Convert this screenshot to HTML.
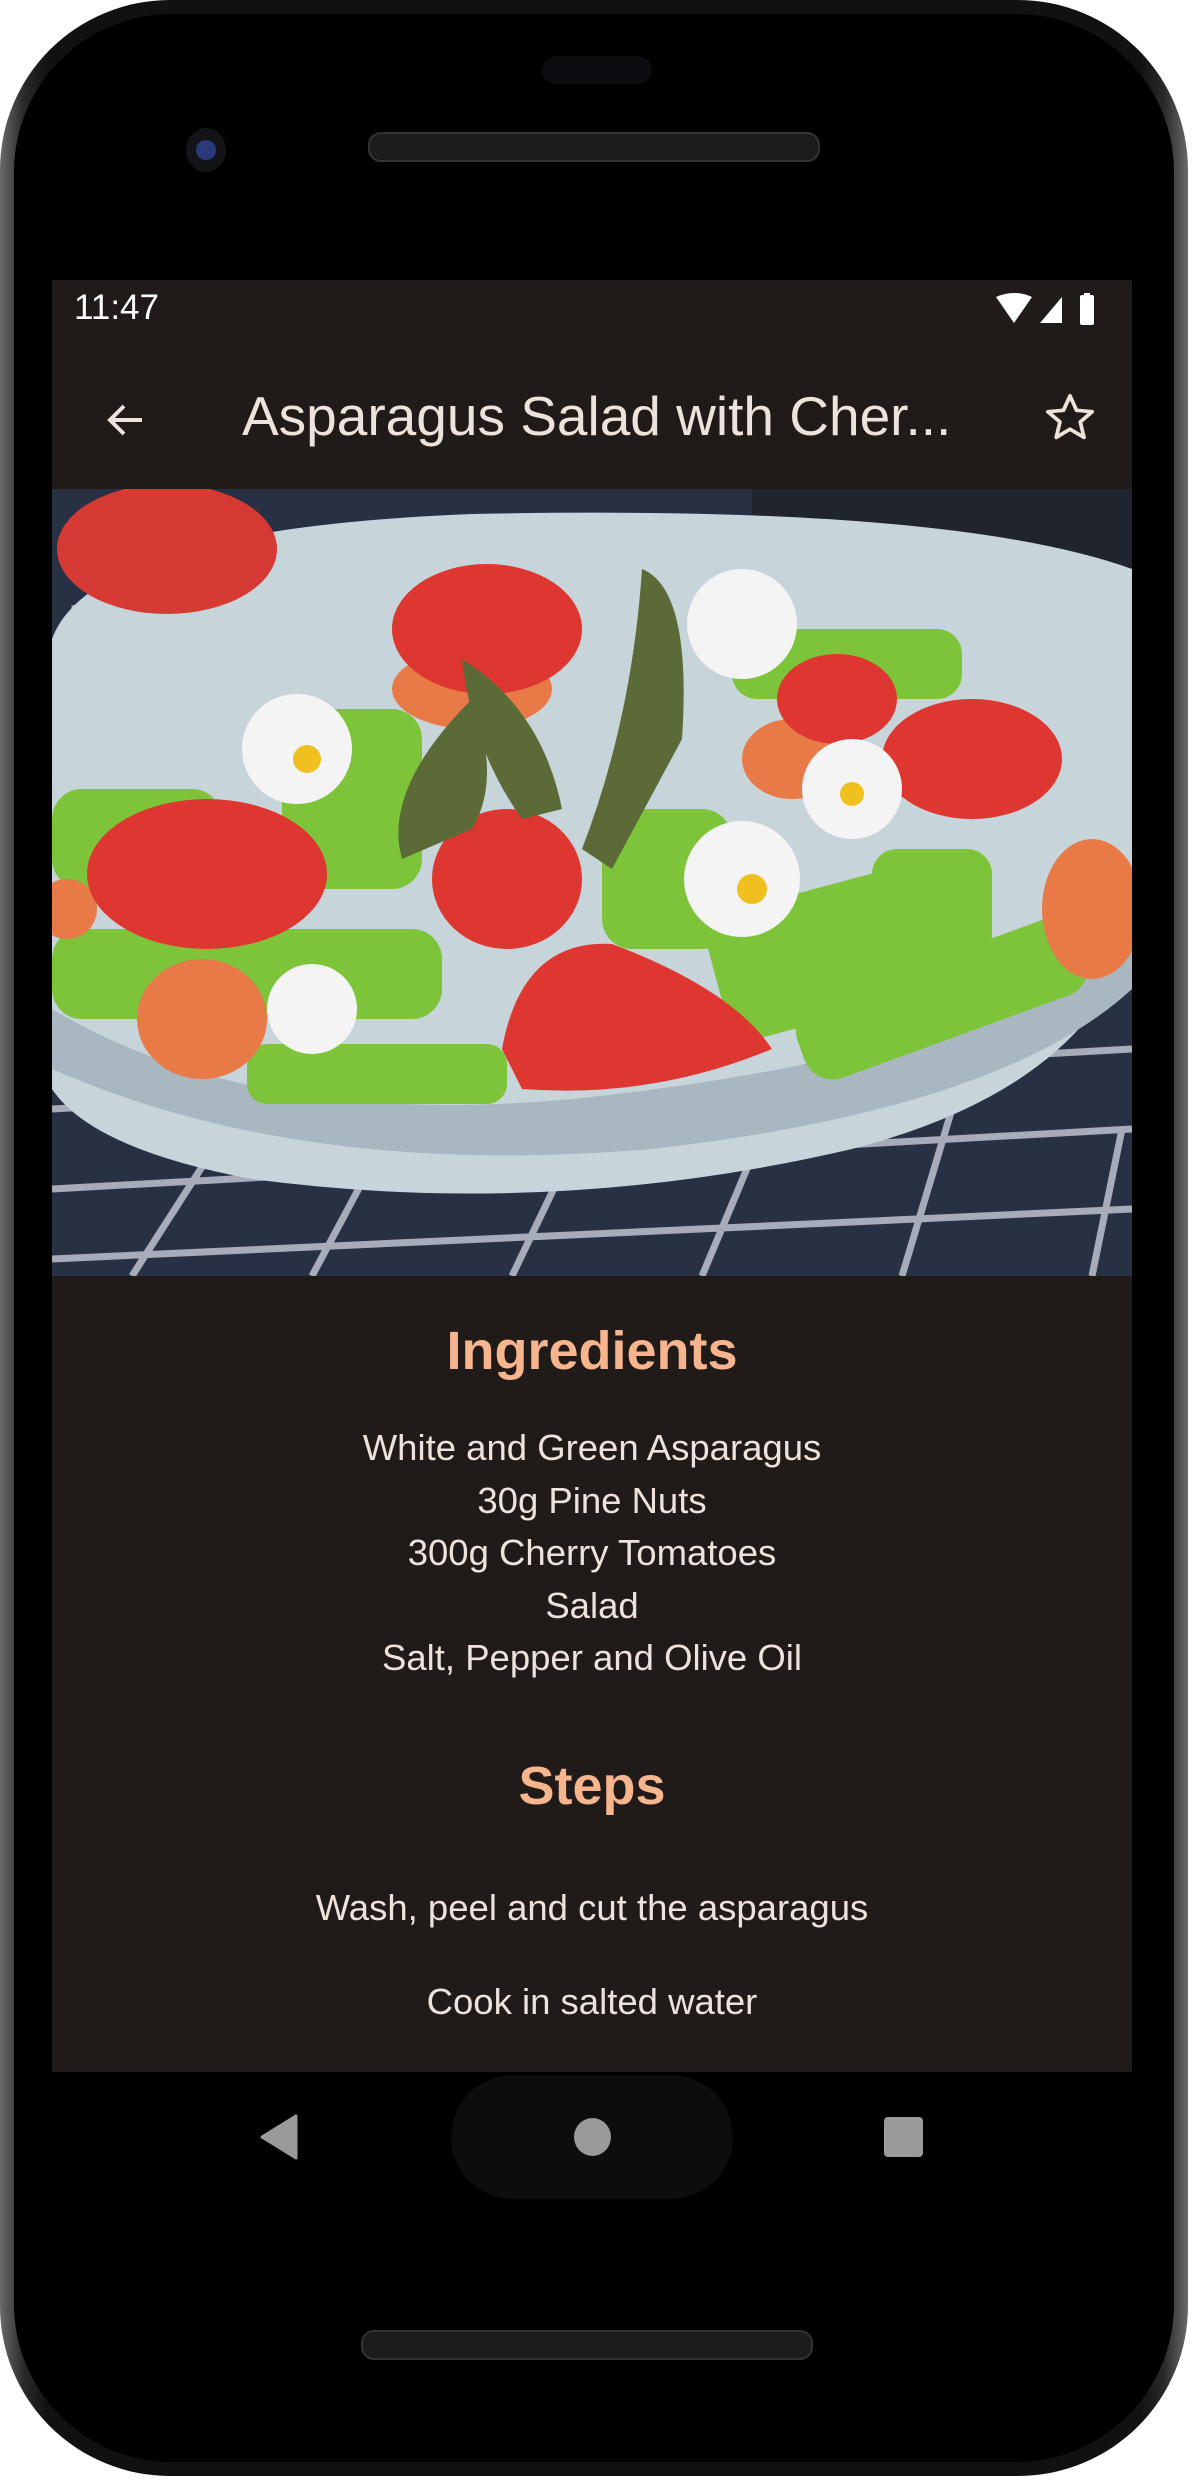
<!DOCTYPE html>
<html><head><meta charset="utf-8"><style>
html,body{margin:0;padding:0;background:#fff;}
body{width:1194px;height:2480px;position:relative;overflow:hidden;font-family:"Liberation Sans",sans-serif;}
.phone{position:absolute;left:0;top:0;width:1188px;height:2476px;border-radius:170px;background:linear-gradient(90deg,#6a6a6a,#2a2a2a 2%,#111 4%,#111 96%,#2a2a2a 98%,#6a6a6a);}
.inner{position:absolute;left:14px;top:14px;right:14px;bottom:14px;border-radius:158px;background:#000;}
.screen{position:absolute;left:52px;top:280px;width:1080px;height:1792px;background:#201b18;color:#eee2dc;}
.abs{position:absolute;}
.c{position:absolute;left:0;width:1080px;text-align:center;}
.ing{font-size:36.5px;line-height:52.5px;}
h2{margin:0;font-weight:bold;color:#f7b58e;font-size:54px;}
</style></head><body>
<div class="phone"><div class="inner"></div></div>
<div class="abs" style="left:542px;top:56px;width:110px;height:28px;border-radius:14px;background:#0a0c10"></div>
<div class="abs" style="left:368px;top:132px;width:448px;height:26px;border-radius:13px;background:#1c1c1c;border:2px solid #333"></div>
<div class="abs" style="left:186px;top:128px;width:40px;height:44px;border-radius:50%;background:#121418;"></div>
<div class="abs" style="left:196px;top:140px;width:20px;height:20px;border-radius:50%;background:#2a3a7a;"></div>
<div class="abs" style="left:361px;top:2330px;width:448px;height:26px;border-radius:13px;background:#1c1c1c;border:2px solid #333"></div>

<div class="screen">
 <div class="abs" style="left:22px;top:8px;font-size:35px;color:#fff">11:47</div>
 <svg class="abs" style="left:944px;top:13px" width="120" height="36" viewBox="0 0 120 36">
  <path d="M0 4 Q18 -4 36 4 L18 30 Z" fill="#fff"/>
  <path d="M44 30 L66 4 L66 30 Z" fill="#fff"/><path d="M58 30 L58 14 L66 6 L66 30Z" fill="#fff"/>
  <rect x="84" y="2" width="14" height="30" rx="2" fill="#fff"/><rect x="88" y="0" width="6" height="3" fill="#fff"/>
 </svg>
 <svg class="abs" style="left:50px;top:116px" width="48" height="48" viewBox="0 0 24 24"><path d="M20 12H5M11 5l-7 7 7 7" stroke="#eee2dc" stroke-width="2" fill="none"/></svg>
 <div class="abs" style="left:190px;top:104px;font-size:55px;white-space:nowrap;color:#eee2dc">Asparagus Salad with Cher...</div>
 <svg class="abs" style="left:990px;top:110px" width="56" height="56" viewBox="0 0 24 24"><path d="M12 2.5l2.8 6.2 6.7.6-5.1 4.4 1.6 6.6L12 16.8l-5.9 3.5 1.6-6.6L2.5 9.3l6.7-.6z" stroke="#eee2dc" stroke-width="1.6" fill="none" stroke-linejoin="round"/></svg>

 <svg class="abs" style="left:0;top:209px" width="1080" height="787" viewBox="0 0 1080 787">
  <rect width="1080" height="787" fill="#283044"/>
  <g stroke="#c8ccd8" stroke-width="7" opacity=".8">
   <path d="M0 620 L1080 560M0 700 L1080 640M0 770 L1080 720M80 787 L200 600M260 787 L360 600M460 787 L540 620M650 787 L720 620M850 787 L900 620M1040 787 L1070 640M20 120 L300 60M0 200 L60 190"/>
  </g>
  <rect x="700" y="0" width="380" height="120" fill="#20242e"/>
  <path d="M0 150 Q40 40 420 25 Q900 15 1080 80 L1080 450 Q1030 600 800 660 Q500 730 200 690 Q40 660 0 600Z" fill="#c7d4da"/>
  <path d="M0 520 Q200 640 520 610 Q900 570 1080 460 L1080 500 Q950 620 600 660 Q250 690 0 580Z" fill="#a9b8c0"/>
  <ellipse cx="115" cy="60" rx="110" ry="65" fill="#d63a34"/>
  <g fill="#7ec43a">
   <rect x="0" y="300" width="170" height="100" rx="30"/>
   <rect x="0" y="440" width="390" height="90" rx="30"/>
   <rect x="195" y="555" width="260" height="60" rx="20"/>
   <rect x="550" y="320" width="130" height="140" rx="30"/>
   <rect x="660" y="400" width="220" height="130" rx="30" transform="rotate(-15 770 460)"/>
   <rect x="740" y="470" width="300" height="80" rx="30" transform="rotate(-20 890 510)"/>
   <rect x="230" y="220" width="140" height="180" rx="30"/>
   <rect x="680" y="140" width="230" height="70" rx="25"/>
   <rect x="820" y="360" width="120" height="110" rx="25"/>
  </g>
  <g fill="#e87a48">
   <ellipse cx="150" cy="530" rx="65" ry="60"/>
   <ellipse cx="1040" cy="420" rx="50" ry="70"/>
   <ellipse cx="740" cy="270" rx="50" ry="40"/>
   <ellipse cx="420" cy="200" rx="80" ry="40"/>
   <ellipse cx="15" cy="420" rx="30" ry="30"/>
  </g>
  <g fill="#de3630">
   <path d="M450 560 Q470 450 560 455 Q680 500 720 560 Q600 610 470 600Z"/>
   <ellipse cx="155" cy="385" rx="120" ry="75"/>
   <ellipse cx="435" cy="140" rx="95" ry="65"/>
   <ellipse cx="920" cy="270" rx="90" ry="60"/>
   <ellipse cx="785" cy="210" rx="60" ry="45"/>
   <ellipse cx="455" cy="390" rx="75" ry="70"/>
  </g>
  <g fill="#5c6a38">
   <path d="M590 80 Q640 100 630 250 L560 380 L530 360 Q580 230 590 80Z"/>
   <path d="M410 170 Q490 220 510 320 L470 330 Q420 260 410 170Z"/>
   <path d="M420 210 Q450 290 420 340 L350 370 Q330 300 420 210Z"/>
  </g>
  <g fill="#f4f4f4">
   <circle cx="245" cy="260" r="55"/><circle cx="690" cy="135" r="55"/>
   <circle cx="690" cy="390" r="58"/><circle cx="800" cy="300" r="50"/>
   <circle cx="260" cy="520" r="45"/>
  </g>
  <g fill="#f0c020">
   <circle cx="255" cy="270" r="14"/><circle cx="700" cy="400" r="15"/><circle cx="800" cy="305" r="12"/>
  </g>
 </svg>

 <div class="c" style="top:1040px"><h2>Ingredients</h2></div>
 <div class="c ing" style="top:1142px">White and Green Asparagus<br>30g Pine Nuts<br>300g Cherry Tomatoes<br>Salad<br>Salt, Pepper and Olive Oil</div>
 <div class="c" style="top:1475px"><h2>Steps</h2></div>
 <div class="c ing" style="top:1602px">Wash, peel and cut the asparagus</div>
 <div class="c ing" style="top:1696px">Cook in salted water</div>
</div>

<div class="abs" style="left:451px;top:2075px;width:282px;height:124px;border-radius:62px;background:#0d0d0d"></div>
<svg class="abs" style="left:258px;top:2114px" width="40" height="46" viewBox="0 0 40 46"><path d="M38 2 L38 44 L4 23Z" fill="#9a9a9a" stroke="#9a9a9a" stroke-width="3" stroke-linejoin="round"/></svg>
<div class="abs" style="left:574px;top:2118px;width:37px;height:38px;border-radius:50%;background:#9a9a9a"></div>
<div class="abs" style="left:884px;top:2117px;width:39px;height:40px;border-radius:4px;background:#9a9a9a"></div>
</body></html>
